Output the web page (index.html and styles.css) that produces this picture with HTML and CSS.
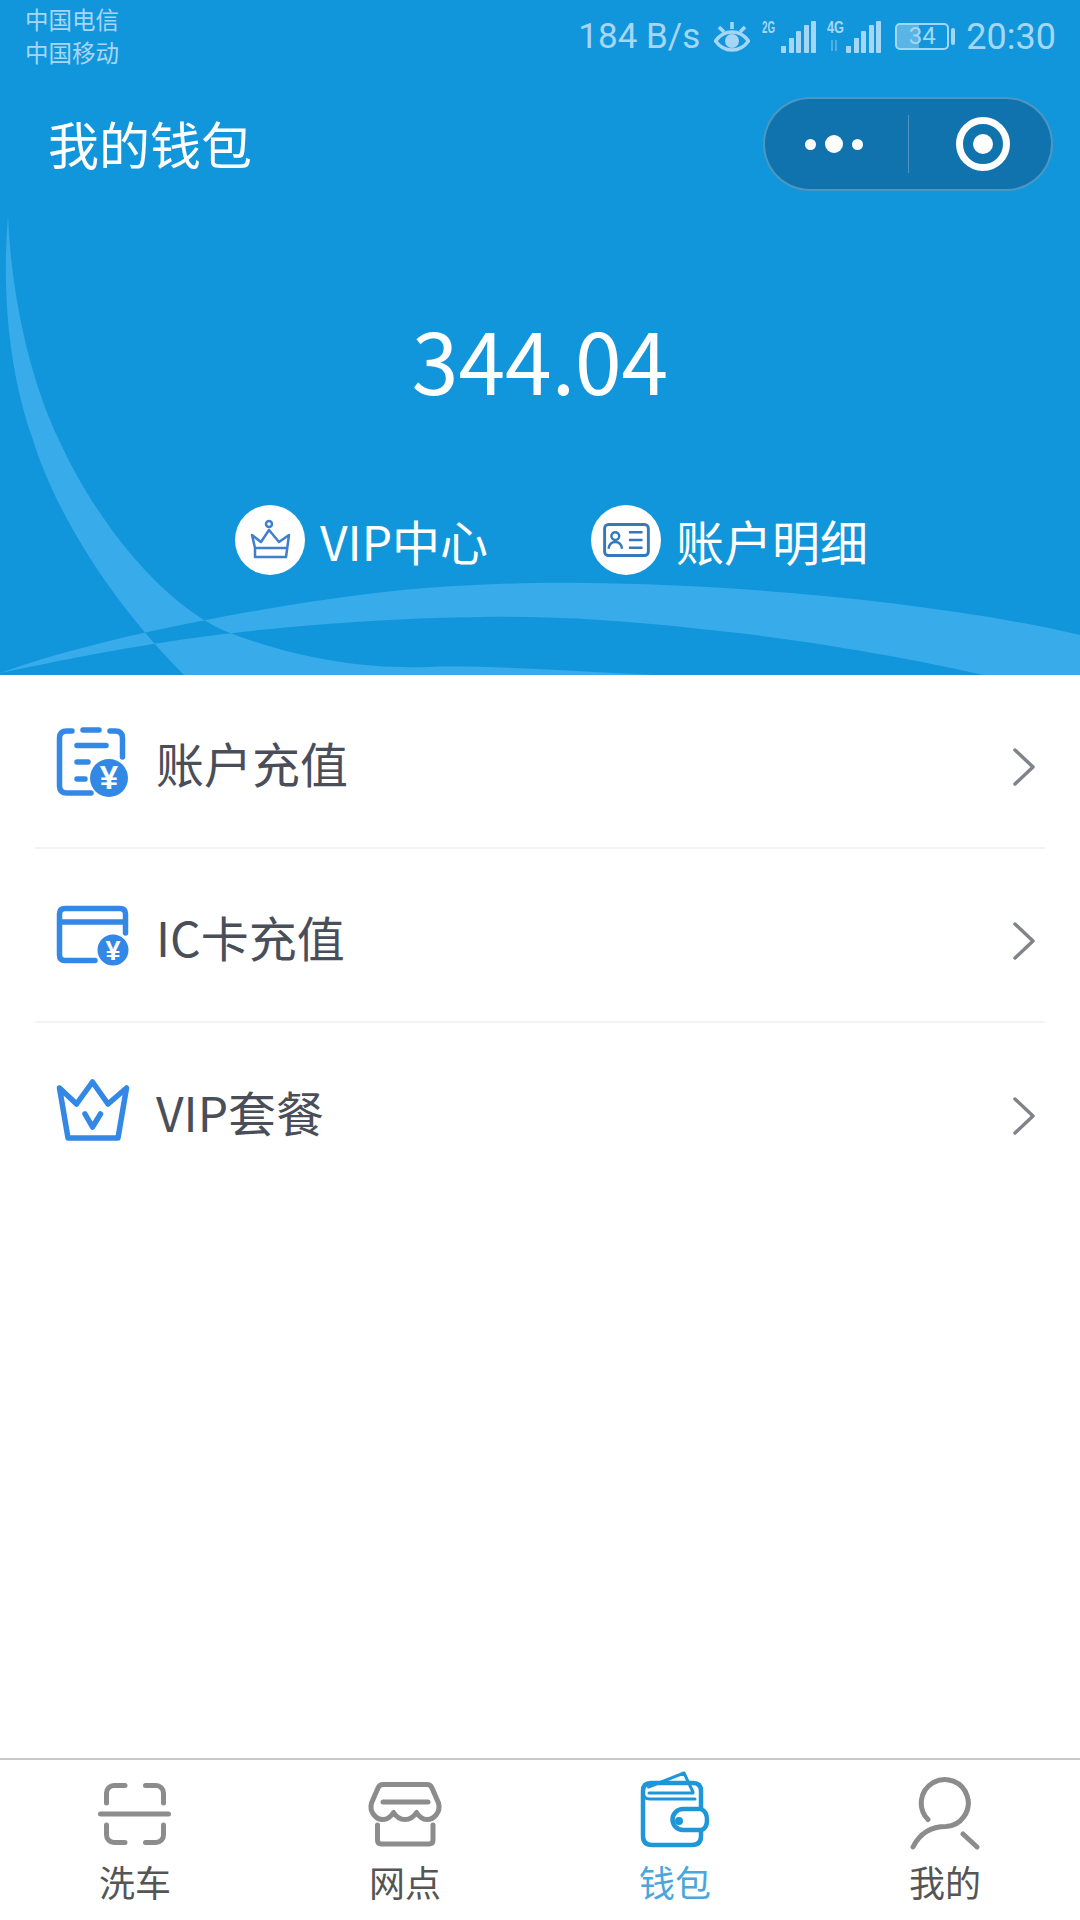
FILE: index.html
```html
<!DOCTYPE html>
<html lang="zh-CN">
<head>
    <meta charset="UTF-8">
    <meta name="viewport" content="width=device-width, initial-scale=1.0">
    <title>我的钱包</title>
    <link rel="stylesheet" href="styles.css">
</head>
<body>
    <div class="page">
        <header class="top">
            <svg class="waves" viewBox="0 0 1080 675" aria-hidden="true">
                <path fill-rule="evenodd" d="M8 216 C2 290 8 370 33 440 C50 495 95 585 184 675 L654 675 C560 670 480 665 427 667 C370 669 300 660 230 633 C170 610 100 530 59 440 C35 390 12 310 8 216 Z M0 673 C100 637 250 610 344 597 C430 585 520 582 585 583 C720 584 930 600 1080 635 L1080 675 L983 675 C930 662 800 638 700 629 C620 620 550 616 482 617 C380 618 250 628 153 644 C90 654 40 665 0 673 Z"/>
            </svg>

            <div class="status">
                <div class="carriers">
                    <div>中国电信</div>
                    <div>中国移动</div>
                </div>
                <div class="status-right">
                    <span class="speed">184 B/s</span>
                    <svg class="eye" viewBox="0 0 36 32">
                        <path d="M1.5 20 C10 8 26 8 34.5 20 C26 32 10 32 1.5 20 Z" fill="none" stroke-width="3.5"/>
                        <circle class="solid" cx="18" cy="20" r="7"/>
                        <path d="M18 1 V8 M5 6 L10 11 M31 6 L26 11" fill="none" stroke-width="3.5"/>
                    </svg>
                    <svg class="signal" viewBox="0 0 54 34">
                        <text x="0" y="13" class="net" textLength="13" lengthAdjust="spacingAndGlyphs">2G</text>
                        <rect x="19" y="26" width="5" height="7" rx="1"/>
                        <rect x="27" y="18" width="5" height="15" rx="1"/>
                        <rect x="34" y="11" width="5" height="22" rx="1"/>
                        <rect x="42" y="5" width="5" height="28" rx="1"/>
                        <rect x="49" y="1" width="5" height="32" rx="1"/>
                    </svg>
                    <svg class="signal" viewBox="0 0 54 34">
                        <text x="0" y="13" class="net" textLength="17" lengthAdjust="spacingAndGlyphs">4G</text>
                        <path class="arrows" d="M5 20 V31 M9 20 V31" fill="none" stroke-width="2"/>
                        <rect x="19" y="26" width="5" height="7" rx="1"/>
                        <rect x="27" y="18" width="5" height="15" rx="1"/>
                        <rect x="34" y="11" width="5" height="22" rx="1"/>
                        <rect x="42" y="5" width="5" height="28" rx="1"/>
                        <rect x="49" y="1" width="5" height="32" rx="1"/>
                    </svg>
                    <div class="battery">
                        <span class="battery-level"></span>
                        <span class="battery-num">34</span>
                    </div>
                    <span class="battery-nub"></span>
                    <span class="clock">20:30</span>
                </div>
            </div>

            <div class="navbar">
                <h1 class="nav-title">我的钱包</h1>
                <div class="capsule">
                    <div class="capsule-dots">
                        <span class="dot"></span>
                        <span class="dot dot-big"></span>
                        <span class="dot"></span>
                    </div>
                    <div class="capsule-line"></div>
                    <div class="capsule-target"><span></span></div>
                </div>
            </div>

            <div class="balance">344.04</div>

            <div class="links">
                <a class="link">
                    <span class="link-icon">
                        <svg viewBox="0 0 70 70" fill="none" stroke="#3f7fce" stroke-width="2.5" stroke-linejoin="round">
                            <circle cx="34" cy="19" r="3"/>
                            <path d="M20 43 L17 30 L26 37 L34 25 L44 37 L54 30 L51 52 H20 V43 H51"/>
                        </svg>
                    </span>
                    VIP中心
                </a>
                <a class="link">
                    <span class="link-icon">
                        <svg viewBox="0 0 72 72" fill="none" stroke="#3579ba" stroke-width="2.5">
                            <rect x="14" y="20" width="45" height="32" rx="4" stroke-width="3"/>
                            <circle cx="25" cy="32" r="4"/>
                            <path d="M18 45 Q19 38 25 38 Q31 38 32 45"/>
                            <path d="M39 28 H53 M39 36 H53 M39 44 H53"/>
                        </svg>
                    </span>
                    账户明细
                </a>
            </div>
        </header>

        <main class="menu">
            <div class="menu-row">
                <svg class="menu-icon" viewBox="0 0 80 74" fill="none">
                    <path d="M17 7 H12 Q4.5 7 4.5 14 V62 Q4.5 69 12 69 H36 M55 7 H60 Q67.5 7 67.5 14 V33"/>
                    <path d="M28 6 H44 M22 21.5 H51 M22 38 H33 M22 55 H30"/>
                    <circle class="coin" cx="54" cy="54" r="19"/>
                    <text class="yen" x="54" y="65" font-size="33">¥</text>
                </svg>
                <span class="menu-label">账户充值</span>
                <svg class="chevron" viewBox="0 0 24 40"><path d="M3 3 L21 20 L3 37"/></svg>
            </div>
            <div class="menu-row">
                <svg class="menu-icon" viewBox="0 0 80 74" fill="none">
                    <g transform="translate(0 7)">
                        <path d="M40 55.5 H10 Q4.5 55.5 4.5 50 V9 Q4.5 3.5 10 3.5 H65 Q70.5 3.5 70.5 9 V28 M4.5 17 H70.5"/>
                        <circle class="coin" cx="58" cy="45" r="15.5"/>
                        <text class="yen" x="58" y="54.5" font-size="27">¥</text>
                    </g>
                </svg>
                <span class="menu-label">IC卡充值</span>
                <svg class="chevron" viewBox="0 0 24 40"><path d="M3 3 L21 20 L3 37"/></svg>
            </div>
            <div class="menu-row">
                <svg class="menu-icon" viewBox="0 0 80 74" fill="none">
                    <path d="M4.5 15 L21.5 31 L37.5 9 L53 31 L71.5 15 L63 65 H13 Z"/>
                    <path d="M30 41 L37.5 54 L45.5 41"/>
                </svg>
                <span class="menu-label">VIP套餐</span>
                <svg class="chevron" viewBox="0 0 24 40"><path d="M3 3 L21 20 L3 37"/></svg>
            </div>
        </main>

        <nav class="tabbar">
            <a class="tab">
                <svg class="tab-icon" viewBox="0 0 80 70">
                    <path d="M11.5 23 V13 a7.5 7.5 0 0 1 7.5-7.5 H30 M50.5 5.5 H61 a7.5 7.5 0 0 1 7.5 7.5 V23 M5.5 34 H73.5 M11.5 45 V55 a7.5 7.5 0 0 0 7.5 7.5 H30 M50.5 62.5 H61 a7.5 7.5 0 0 0 7.5-7.5 V45"/>
                </svg>
                <span>洗车</span>
            </a>
            <a class="tab">
                <svg class="tab-icon" viewBox="0 0 80 70">
                    <path d="M18 4.5 H62 Q65.5 4.5 67 8 L73.5 23 C76 32 69 39.5 62 39.5 C57.5 39.5 54 36.5 51.5 32.5 C49 36.5 44.5 39.5 40 39.5 C35.5 39.5 31 36.5 28.5 32.5 C26 36.5 22.5 39.5 18 39.5 C11 39.5 4 32 6.5 23 L13 8 Q14.5 4.5 18 4.5 Z"/>
                    <path d="M18 22 H63 M12.5 45 V60 Q12.5 64 16.5 64 H64 Q68 64 68 60 V45"/>
                </svg>
                <span>网点</span>
            </a>
            <a class="tab tab-active">
                <svg class="tab-icon" viewBox="0 0 80 70">
                    <path d="M66 28 V11 Q66 3 58 3 H16 Q8 3 8 11 V56 Q8 65 17 65 H57 Q66 65 66 56 V51"/>
                    <path d="M13.5 7 L49 -7 L58 12 M8 12 Q8 19 15 19 H60 M14 13 H58" stroke-width="3"/>
                    <path d="M66 29 H48 a10.5 10.5 0 0 0 0 21 H66 C71 49 72 44 72 40 C72 35 71 31 66 29 Z"/>
                    <circle class="tab-dot" cx="44" cy="41" r="4"/>
                </svg>
                <span>钱包</span>
            </a>
            <a class="tab">
                <svg class="tab-icon" viewBox="0 0 80 70">
                    <path d="M23 39.5 A23.5 23.5 0 1 1 41 46.5 C27 46.5 15 53 8 67 M58 54 L72 67"/>
                </svg>
                <span>我的</span>
            </a>
        </nav>
    </div>
</body>
</html>
```

FILE: styles.css
```css
:root {
    --header-bg: #1296db;
    --wave: #38abeb;
    --status: #a6d6f5;
    --capsule: #1073ae;
    --menu-text: #4a4e59;
    --menu-icon: #3388e6;
    --divider: #f3f3f3;
    --tab-icon: #8c8c8c;
    --tab-text: #555;
    --tab-active: #1e96d8;
    --cjk: "Noto Sans CJK SC", "Noto Sans", sans-serif;
}

* {
    box-sizing: border-box;
}

body {
    margin: 0;
    background-color: #fff;
    font-family: var(--cjk);
}

.page {
    width: 1080px;
    height: 1920px;
    display: flex;
    flex-direction: column;
    overflow: hidden;
}

/* 顶部蓝色区域 */
.top {
    position: relative;
    height: 675px;
    background-color: var(--header-bg);
    color: #fff;
}

.waves {
    position: absolute;
    left: 0;
    top: 0;
    width: 1080px;
    height: 675px;
    fill: var(--wave);
}

.status {
    position: relative;
    height: 72px;
    padding: 3px 24px 0 25px;
    display: flex;
    justify-content: space-between;
    color: var(--status);
}

.carriers {
    font-size: 23.5px;
    line-height: 33px;
}

.status-right {
    height: 67px;
    display: flex;
    align-items: center;
    font-family: Roboto, sans-serif;
    font-size: 36px;
}

.speed {
    margin-right: 14px;
    font-size: 35px;
}

.eye {
    width: 36px;
    height: 32px;
    margin-right: 12px;
    fill: none;
    stroke: var(--status);
}

.eye .solid {
    fill: var(--status);
    stroke: none;
}

.signal {
    width: 54px;
    height: 34px;
    margin-right: 11px;
    fill: var(--status);
}

.net {
    font-family: "Liberation Sans", sans-serif;
    font-size: 16px;
    font-weight: 700;
}

.arrows {
    stroke: var(--status);
    opacity: 0.4;
}

.battery {
    position: relative;
    width: 54px;
    height: 27px;
    margin-left: 3px;
    border: 2px solid var(--status);
    border-radius: 5px;
    overflow: hidden;
}

.battery-level {
    position: absolute;
    left: 0;
    top: 0;
    bottom: 0;
    width: 22px;
    background-color: rgba(255, 255, 255, 0.3);
}

.battery-num {
    position: absolute;
    left: 0;
    right: 0;
    top: 0;
    text-align: center;
    font-size: 24px;
    line-height: 23px;
}

.battery-nub {
    width: 4px;
    height: 17px;
    margin: 0 11px 0 2px;
    border-radius: 2px;
    background-color: var(--status);
}

.navbar {
    position: relative;
    height: 144px;
    padding: 0 27px 0 48px;
    display: flex;
    justify-content: space-between;
    align-items: center;
}

.nav-title {
    margin: 0 0 2px;
    font-size: 51px;
    font-weight: 400;
}

.capsule {
    width: 290px;
    height: 94px;
    display: flex;
    align-items: center;
    background-color: var(--capsule);
    border: 2px solid rgba(255, 255, 255, 0.25);
    border-radius: 47px;
}

.capsule-dots {
    width: 143px;
    padding-right: 6px;
    display: flex;
    justify-content: center;
    align-items: center;
    gap: 9px;
}

.dot {
    width: 11px;
    height: 11px;
    border-radius: 50%;
    background-color: #fff;
}

.dot-big {
    width: 18px;
    height: 18px;
}

.capsule-line {
    width: 1px;
    height: 58px;
    background-color: rgba(255, 255, 255, 0.25);
}

.capsule-target {
    flex: 1;
    padding-left: 5px;
    display: flex;
    justify-content: center;
}

.capsule-target span {
    width: 54px;
    height: 54px;
    border: 7px solid #fff;
    border-radius: 50%;
    display: flex;
    align-items: center;
    justify-content: center;
}

.capsule-target span::after {
    content: "";
    width: 20px;
    height: 20px;
    border-radius: 50%;
    background-color: #fff;
}

.balance {
    position: relative;
    margin-top: 93px;
    text-align: center;
    font-size: 84px;
    line-height: 100px;
}

.links {
    position: relative;
    margin-top: 95px;
    padding-left: 235px;
    display: flex;
    gap: 103px;
}

.link {
    display: flex;
    align-items: center;
    gap: 15px;
    font-size: 48px;
    line-height: 72px;
}

.link-icon {
    width: 70px;
    height: 70px;
    border-radius: 50%;
    background-color: #fff;
}

.link-icon svg {
    display: block;
    width: 70px;
    height: 70px;
}

/* 菜单列表 */
.menu {
    flex: 1;
    padding: 0 35px;
}

.menu-row {
    height: 174px;
    padding-left: 20px;
    padding-right: 9px;
    display: flex;
    align-items: center;
    border-bottom: 2px solid var(--divider);
}

.menu-row:last-child {
    border-bottom: none;
}

.menu-icon {
    width: 80px;
    height: 74px;
    margin-right: 21px;
    stroke: var(--menu-icon);
    stroke-width: 5.5;
    stroke-linecap: round;
    stroke-linejoin: round;
}

.coin {
    fill: var(--menu-icon);
    stroke: none;
}

.yen {
    fill: #fff;
    stroke: none;
    text-anchor: middle;
    font-family: "Liberation Sans", sans-serif;
    font-weight: 700;
}

.menu-label {
    flex: 1;
    padding-top: 2px;
    font-size: 48px;
    color: var(--menu-text);
}

.chevron {
    width: 24px;
    height: 40px;
    margin-top: 12px;
    fill: none;
    stroke: #80838a;
    stroke-width: 3.5;
    stroke-linecap: round;
    stroke-linejoin: round;
}

/* 底部导航 */
.tabbar {
    height: 162px;
    padding-top: 20px;
    display: grid;
    grid-template-columns: repeat(4, 1fr);
    border-top: 2px solid #c9c9c9;
}

.tab {
    display: flex;
    flex-direction: column;
    align-items: center;
    font-size: 36px;
    line-height: 40px;
    color: var(--tab-text);
}

.tab span {
    margin-top: 11px;
}

.tab-icon {
    width: 80px;
    height: 70px;
    overflow: visible;
    fill: none;
    stroke: var(--tab-icon);
    stroke-width: 5;
    stroke-linecap: round;
    stroke-linejoin: round;
}

.tab-active {
    color: #4ba6dc;
}

.tab-active .tab-icon {
    stroke: var(--tab-active);
    stroke-width: 4.5;
}

.tab-dot {
    fill: var(--tab-active);
    stroke: none;
}
```
